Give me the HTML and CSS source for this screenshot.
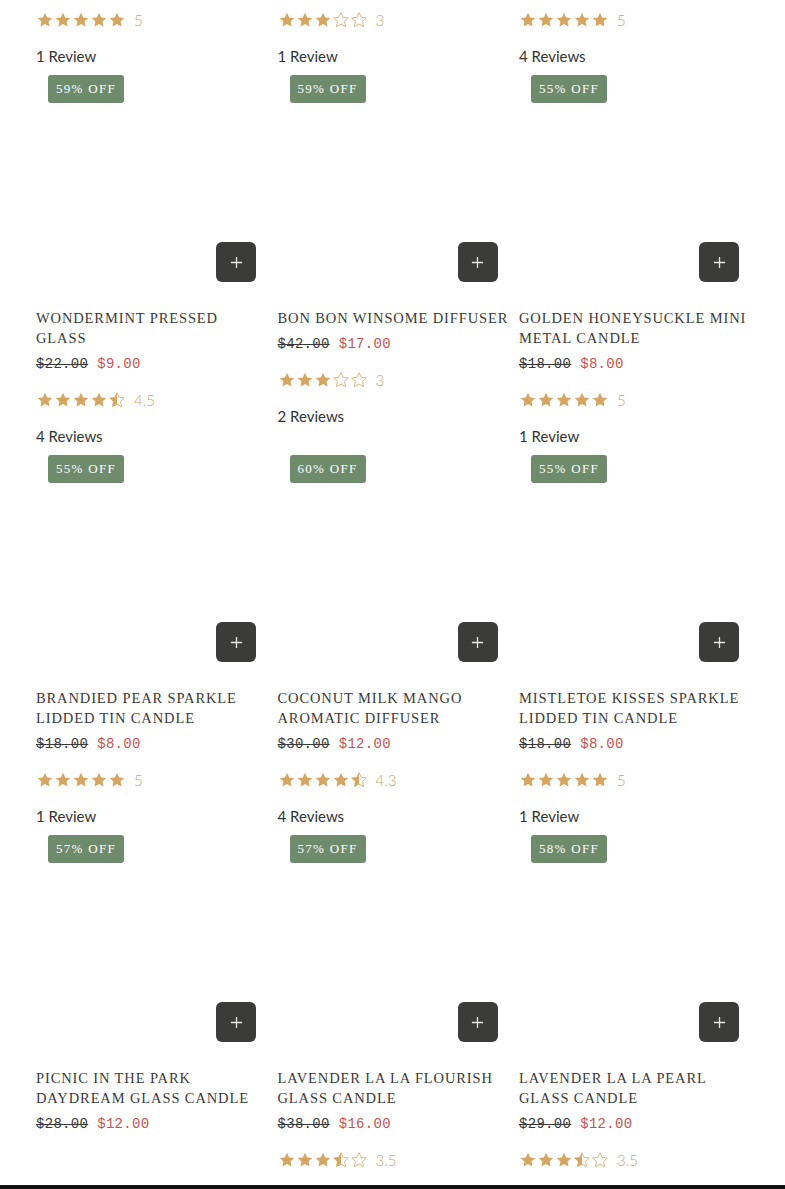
FILE: index.html
```html
<!DOCTYPE html>
<html lang="en">
<head>
<meta charset="utf-8">
<title>Candles</title>
<link rel="stylesheet" href="styles.css">
</head>
<body>
<svg class="defs" width="0" height="0" aria-hidden="true">
  <defs>
    <clipPath id="left-half"><rect x="0" y="0" width="12" height="24"/></clipPath>
    <symbol id="s-full" viewBox="0 0 24 24"><path d="M12 2.3l2.95 6.2 6.75.85-4.95 4.7 1.3 6.75L12 17.45l-6.05 3.35 1.3-6.75-4.950-4.7 6.75-.85z" fill="currentColor"/></symbol>
    <symbol id="s-empty" viewBox="0 0 24 24"><path d="M12 2.3l2.95 6.2 6.75.85-4.95 4.7 1.3 6.75L12 17.45l-6.05 3.35 1.3-6.75-4.95-4.7 6.75-.85z" fill="none" stroke="currentColor" stroke-width="1.1" stroke-linejoin="round"/></symbol>
    <symbol id="s-half" viewBox="0 0 24 24"><path d="M12 2.3l2.95 6.2 6.75.85-4.95 4.7 1.3 6.75L12 17.45l-6.05 3.35 1.3-6.75-4.95-4.7 6.75-.85z" fill="none" stroke="currentColor" stroke-width="1.1" stroke-linejoin="round"/><path d="M12 2.3l2.95 6.2 6.75.85-4.95 4.7 1.3 6.75L12 17.45l-6.05 3.35 1.3-6.75-4.95-4.7 6.75-.85z" fill="currentColor" clip-path="url(#left-half)"/></symbol>
    <symbol id="plus" viewBox="0 0 14 14"><path d="M7 1v12M1 7h12" stroke="currentColor" stroke-width="1.4"/></symbol>
  </defs>
</svg>

<main class="grid">
  <!-- row 0 (tail of previous cards) -->
  <div class="card card--tail">
    <div class="rating"><span class="stars"><svg><use href="#s-full"/></svg><svg><use href="#s-full"/></svg><svg><use href="#s-full"/></svg><svg><use href="#s-full"/></svg><svg><use href="#s-full"/></svg></span><span class="score">5</span></div>
    <div class="reviews">1 Review</div>
  </div>
  <div class="card card--tail">
    <div class="rating"><span class="stars"><svg><use href="#s-full"/></svg><svg><use href="#s-full"/></svg><svg><use href="#s-full"/></svg><svg><use href="#s-empty"/></svg><svg><use href="#s-empty"/></svg></span><span class="score">3</span></div>
    <div class="reviews">1 Review</div>
  </div>
  <div class="card card--tail">
    <div class="rating"><span class="stars"><svg><use href="#s-full"/></svg><svg><use href="#s-full"/></svg><svg><use href="#s-full"/></svg><svg><use href="#s-full"/></svg><svg><use href="#s-full"/></svg></span><span class="score">5</span></div>
    <div class="reviews">4 Reviews</div>
  </div>

  <!-- row 1 -->
  <div class="card">
    <div class="media"><span class="badge">59% OFF</span><button class="add" aria-label="Add"><svg><use href="#plus"/></svg></button></div>
    <h3 class="title">WONDERMINT PRESSED GLASS</h3>
    <div class="price"><s>$22.00</s><span class="sale">$9.00</span></div>
    <div class="rating"><span class="stars"><svg><use href="#s-full"/></svg><svg><use href="#s-full"/></svg><svg><use href="#s-full"/></svg><svg><use href="#s-full"/></svg><svg><use href="#s-half"/></svg></span><span class="score">4.5</span></div>
    <div class="reviews">4 Reviews</div>
  </div>
  <div class="card">
    <div class="media"><span class="badge">59% OFF</span><button class="add" aria-label="Add"><svg><use href="#plus"/></svg></button></div>
    <h3 class="title">BON BON WINSOME DIFFUSER</h3>
    <div class="price"><s>$42.00</s><span class="sale">$17.00</span></div>
    <div class="rating"><span class="stars"><svg><use href="#s-full"/></svg><svg><use href="#s-full"/></svg><svg><use href="#s-full"/></svg><svg><use href="#s-empty"/></svg><svg><use href="#s-empty"/></svg></span><span class="score">3</span></div>
    <div class="reviews">2 Reviews</div>
  </div>
  <div class="card">
    <div class="media"><span class="badge">55% OFF</span><button class="add" aria-label="Add"><svg><use href="#plus"/></svg></button></div>
    <h3 class="title">GOLDEN HONEYSUCKLE MINI METAL CANDLE</h3>
    <div class="price"><s>$18.00</s><span class="sale">$8.00</span></div>
    <div class="rating"><span class="stars"><svg><use href="#s-full"/></svg><svg><use href="#s-full"/></svg><svg><use href="#s-full"/></svg><svg><use href="#s-full"/></svg><svg><use href="#s-full"/></svg></span><span class="score">5</span></div>
    <div class="reviews">1 Review</div>
  </div>

  <!-- row 2 -->
  <div class="card">
    <div class="media"><span class="badge">55% OFF</span><button class="add" aria-label="Add"><svg><use href="#plus"/></svg></button></div>
    <h3 class="title">BRANDIED PEAR SPARKLE LIDDED TIN CANDLE</h3>
    <div class="price"><s>$18.00</s><span class="sale">$8.00</span></div>
    <div class="rating"><span class="stars"><svg><use href="#s-full"/></svg><svg><use href="#s-full"/></svg><svg><use href="#s-full"/></svg><svg><use href="#s-full"/></svg><svg><use href="#s-full"/></svg></span><span class="score">5</span></div>
    <div class="reviews">1 Review</div>
  </div>
  <div class="card">
    <div class="media"><span class="badge">60% OFF</span><button class="add" aria-label="Add"><svg><use href="#plus"/></svg></button></div>
    <h3 class="title">COCONUT MILK MANGO AROMATIC DIFFUSER</h3>
    <div class="price"><s>$30.00</s><span class="sale">$12.00</span></div>
    <div class="rating"><span class="stars"><svg><use href="#s-full"/></svg><svg><use href="#s-full"/></svg><svg><use href="#s-full"/></svg><svg><use href="#s-full"/></svg><svg><use href="#s-half"/></svg></span><span class="score">4.3</span></div>
    <div class="reviews">4 Reviews</div>
  </div>
  <div class="card">
    <div class="media"><span class="badge">55% OFF</span><button class="add" aria-label="Add"><svg><use href="#plus"/></svg></button></div>
    <h3 class="title">MISTLETOE KISSES SPARKLE LIDDED TIN CANDLE</h3>
    <div class="price"><s>$18.00</s><span class="sale">$8.00</span></div>
    <div class="rating"><span class="stars"><svg><use href="#s-full"/></svg><svg><use href="#s-full"/></svg><svg><use href="#s-full"/></svg><svg><use href="#s-full"/></svg><svg><use href="#s-full"/></svg></span><span class="score">5</span></div>
    <div class="reviews">1 Review</div>
  </div>

  <!-- row 3 -->
  <div class="card">
    <div class="media"><span class="badge">57% OFF</span><button class="add" aria-label="Add"><svg><use href="#plus"/></svg></button></div>
    <h3 class="title">PICNIC IN THE PARK DAYDREAM GLASS CANDLE</h3>
    <div class="price"><s>$28.00</s><span class="sale">$12.00</span></div>
  </div>
  <div class="card">
    <div class="media"><span class="badge">57% OFF</span><button class="add" aria-label="Add"><svg><use href="#plus"/></svg></button></div>
    <h3 class="title">LAVENDER LA LA FLOURISH GLASS CANDLE</h3>
    <div class="price"><s>$38.00</s><span class="sale">$16.00</span></div>
    <div class="rating"><span class="stars"><svg><use href="#s-full"/></svg><svg><use href="#s-full"/></svg><svg><use href="#s-full"/></svg><svg><use href="#s-half"/></svg><svg><use href="#s-empty"/></svg></span><span class="score">3.5</span></div>
  </div>
  <div class="card">
    <div class="media"><span class="badge">58% OFF</span><button class="add" aria-label="Add"><svg><use href="#plus"/></svg></button></div>
    <h3 class="title">LAVENDER LA LA PEARL GLASS CANDLE</h3>
    <div class="price"><s>$29.00</s><span class="sale">$12.00</span></div>
    <div class="rating"><span class="stars"><svg><use href="#s-full"/></svg><svg><use href="#s-full"/></svg><svg><use href="#s-full"/></svg><svg><use href="#s-half"/></svg><svg><use href="#s-empty"/></svg></span><span class="score">3.5</span></div>
  </div>
</main>

<div class="bottom-bar"></div>
</body>
</html>
```

FILE: styles.css
```css
html, body {
  margin: 0;
  padding: 0;
  background: #ffffff;
}

body {
  height: 1189px;
  overflow: hidden;
  font-family: "Lato", "Open Sans", sans-serif;
  color: #333333;
}

.defs {
  position: absolute;
  width: 0;
  height: 0;
  overflow: hidden;
}

.grid {
  display: grid;
  grid-template-columns: repeat(3, 232px);
  column-gap: 9.5px;
  row-gap: 0;
  align-items: start;
  padding: 10px 0 0 36px;
}

.card {
  display: flex;
  flex-direction: column;
  align-items: flex-start;
  height: 380px;
}

.card--tail {
  height: 53px;
}

.card--tail .rating {
  margin-top: 0;
}

.media {
  position: relative;
  width: 232px;
  height: 232px;
  background: #ffffff;
  flex: none;
}

.badge {
  position: absolute;
  top: 12px;
  left: 12px;
  height: 28px;
  line-height: 28px;
  padding: 0 8px;
  border-radius: 3px;
  background: #6e8b6c;
  color: #ffffff;
  font-family: "Liberation Serif", "DejaVu Serif", serif;
  font-size: 13px;
  letter-spacing: 1.3px;
  white-space: nowrap;
}

.add {
  position: absolute;
  right: 12px;
  bottom: 13px;
  width: 40px;
  height: 40px;
  padding: 0;
  border: 0;
  border-radius: 6px;
  background: #3b3b39;
  color: #e6e6e6;
  display: flex;
  align-items: center;
  justify-content: center;
}

.add svg {
  width: 13px;
  height: 13px;
}

.title {
  margin: 13px 0 0;
  font-family: "Liberation Serif", "DejaVu Serif", serif;
  font-weight: 400;
  font-size: 14.5px;
  line-height: 20px;
  letter-spacing: 0.88px;
  color: #3a3a3a;
  width: 232px;
}

.price {
  margin-top: 6px;
  display: flex;
  gap: 9px;
  font-family: "Liberation Mono", "DejaVu Sans Mono", monospace;
  font-size: 14px;
  line-height: 20px;
  letter-spacing: 0.3px;
}

.price s {
  color: #3a3a3a;
  text-decoration-thickness: 1px;
}

.price .sale {
  color: #c9534f;
}

.rating {
  margin-top: 16px;
  display: flex;
  align-items: center;
  height: 20px;
  color: #d4a662;
}

.stars {
  display: flex;
  gap: 0;
}

.stars svg {
  width: 18px;
  height: 18px;
  display: block;
}

.score {
  margin-left: 8px;
  font-family: "Lato", sans-serif;
  font-weight: 300;
  font-size: 15px;
  line-height: 20px;
  color: #c7a66f;
}

.reviews {
  margin-top: 19px;
  font-size: 15px;
  line-height: 14px;
  color: #333333;
}

.bottom-bar {
  position: fixed;
  left: 0;
  right: 0;
  bottom: 0;
  height: 4px;
  background: #111111;
}
```
